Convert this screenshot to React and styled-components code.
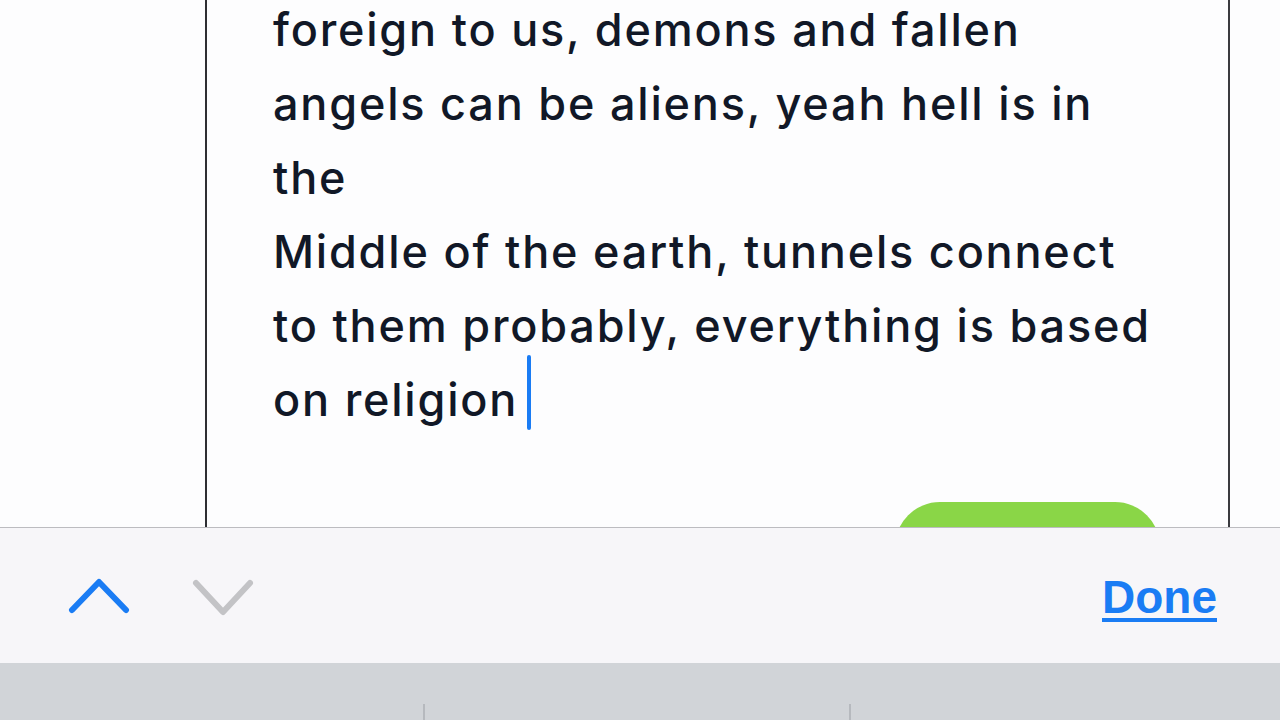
import React from "react";
import styled, { createGlobalStyle } from "styled-components";

const Global = createGlobalStyle`
  html, body { margin: 0; padding: 0; background: #fdfdfe; }
  body { font-family: Inter, "Noto Sans", sans-serif; }
`;

const Screen = styled.div`
  width: 1280px;
  height: 720px;
  display: flex;
  flex-direction: column;
  overflow: hidden;
`;

const Canvas = styled.div`
  height: 527px;
  overflow: hidden;
  flex-shrink: 0;
  background: #fdfdfe;
`;

const Sheet = styled.div`
  display: flow-root;
  margin-left: 205px;
  width: 1021px;
  height: 100%;
  border-left: 2px solid #2e2e33;
  border-right: 2px solid #3a3a3f;
  background: #fdfdfe;
`;

const Body = styled.div`
  margin-top: -7px;
  padding-left: 66px;
  font-size: 45px;
  line-height: 74px;
  font-weight: 500;
  color: #111827;
  letter-spacing: 1.8px;
`;

const Line = styled.div`
  white-space: nowrap;
`;

/* caret pokes a little above its line, so it is nudged up */
const Caret = styled.span`
  display: inline-block;
  position: relative;
  top: -8px;
  width: 4px;
  height: 75px;
  margin-left: 9px;
  border-radius: 2px;
  background: #1a7cf4;
  vertical-align: -22px;
`;

const Bubble = styled.div`
  margin-top: 64px;
  margin-left: 688px;
  width: 265px;
  height: 90px;
  border-radius: 45px;
  background: #8ad647;
`;

const Toolbar = styled.div`
  height: 135px;
  flex-shrink: 0;
  border-top: 1px solid #bcbcc0;
  background: #f7f6f9;
  display: flex;
  align-items: center;
  padding: 0 63px 0 68px;
`;

const Arrows = styled.div`
  display: flex;
  align-items: center;
  gap: 62px;
  margin-top: 2px;
`;

const Done = styled.span`
  margin-left: auto;
  font-family: "Liberation Sans", Arial, sans-serif;
  font-size: 46px;
  font-weight: 700;
  color: #1a7cf4;
  text-decoration: underline;
  text-decoration-thickness: 4px;
  text-underline-offset: 5px;
  margin-top: 2px;
`;

const Keyboard = styled.div`
  flex: 1;
  background: #d1d4d8;
  display: grid;
  grid-template-columns: 425px 426px 1fr;
  padding-top: 41px;
`;

const Cell = styled.div`
  border-right: ${(p) => (p.$sep ? "2px solid #b6b9be" : "none")};
`;

function Chevron({ up, color }) {
  return (
    <svg width="62" height="40" viewBox="0 0 62 40">
      <path
        d={up ? "M4 33 L31 5 L58 33" : "M4 6 L31 35 L58 6"}
        fill="none"
        stroke={color}
        strokeWidth="6"
        strokeLinecap="round"
        strokeLinejoin="round"
      />
    </svg>
  );
}

export default function App() {
  return (
    <>
      <Global />
      <Screen>
        <Canvas>
          <Sheet>
            <Body>
              <Line>foreign to us, demons and fallen</Line>
              <Line>angels can be aliens, yeah hell is in</Line>
              <Line>the</Line>
              <Line>Middle of the earth, tunnels connect</Line>
              <Line>to them probably, everything is based</Line>
              <Line>
                on religion
                <Caret />
              </Line>
            </Body>
            <Bubble />
          </Sheet>
        </Canvas>
        <Toolbar>
          <Arrows>
            <Chevron up color="#1a7cf4" />
            <Chevron color="#c3c3c6" />
          </Arrows>
          <Done>Done</Done>
        </Toolbar>
        <Keyboard>
          <Cell $sep />
          <Cell $sep />
          <Cell />
        </Keyboard>
      </Screen>
    </>
  );
}
